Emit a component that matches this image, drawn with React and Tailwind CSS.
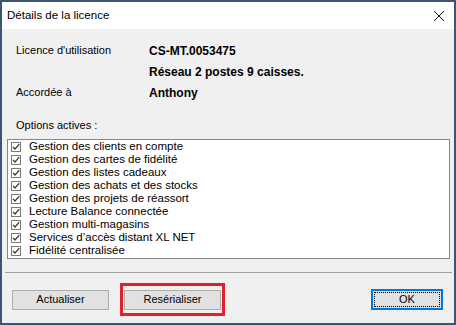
import React from 'react'

const OPTIONS = [
  'Gestion des clients en compte',
  'Gestion des cartes de fidélité',
  'Gestion des listes cadeaux',
  'Gestion des achats et des stocks',
  'Gestion des projets de réassort',
  'Lecture Balance connectée',
  'Gestion multi-magasins',
  'Services d’accès distant XL NET',
  'Fidélité centralisée',
]

function CheckMark() {
  return (
    <svg width="10" height="10" viewBox="0 0 10 10" className="shrink-0">
      <rect x="0.5" y="0.5" width="9" height="9" fill="#fff" stroke="#7a7a7a" />
      <path d="M2 4.8 L4 7 L8.3 2.2" fill="none" stroke="#333" strokeWidth="1.2" />
    </svg>
  )
}

function InfoRow({ label, value }) {
  return (
    <div className="flex items-center h-[21px]">
      <span className="w-[133px] shrink-0">{label}</span>
      <span className="font-bold text-[12px]">{value}</span>
    </div>
  )
}

export default function App() {
  return (
    <div
      className="w-[456px] h-[325px] border-2 border-[#3a5675] flex flex-col bg-[#f0f0f0] text-black text-[11px] overflow-hidden"
      style={{ fontFamily: '"Liberation Sans", Arial, sans-serif' }}
    >
      {/* title bar */}
      <div className="h-[27px] bg-white flex items-center justify-between pl-[5px] pr-[8px] shrink-0">
        <span className="text-[11.5px]">Détails de la licence</span>
        <svg width="12" height="12" viewBox="0 0 12 12" className="mr-[1px]">
          <path d="M1 1 L11 11 M11 1 L1 11" stroke="#111" strokeWidth="1" fill="none" />
        </svg>
      </div>

      {/* body */}
      <div className="flex flex-col flex-1 pt-[11px]">
        <div className="pl-[14px]">
          <InfoRow label="Licence d'utilisation" value="CS-MT.0053475" />
          <InfoRow label="" value="Réseau 2 postes 9 caisses." />
          <InfoRow label="Accordée à" value="Anthony" />
        </div>

        <div className="pl-[14px] mt-[16px] h-[13px] flex items-center">Options actives :</div>

        <div className="ml-[5px] mt-[7px] w-[443px] h-[120px] bg-white border border-[#828790] pl-[3px] text-[11.5px]">
          {OPTIONS.map((opt) => (
            <div key={opt} className="flex items-center h-[13px] gap-[8px]">
              <CheckMark />
              <span className="leading-none">{opt}</span>
            </div>
          ))}
        </div>

        <div className="ml-[3px] mt-[13px] w-[447px] h-px bg-[#a0a0a0]" />

        <div className="flex items-center mt-[10px] h-[33px] pl-[10px] pr-[11px]">
          <button className="w-[97px] h-[20px] bg-[#e1e1e1] border border-[#adadad] flex items-center justify-center">
            Actualiser
          </button>
          <div className="ml-[11px] w-[105px] h-[33px] border-[3px] border-[#e0202c] flex items-center justify-center">
            <button className="w-[97px] h-[20px] bg-[#e1e1e1] border border-[#adadad] flex items-center justify-center">
              Resérialiser
            </button>
          </div>
          <button className="ml-auto w-[72px] h-[21px] bg-[#e1e1e1] border-2 border-[#0078d7] p-px flex">
            <span className="flex-1 border border-dotted border-black flex items-center justify-center">OK</span>
          </button>
        </div>
      </div>
    </div>
  )
}
